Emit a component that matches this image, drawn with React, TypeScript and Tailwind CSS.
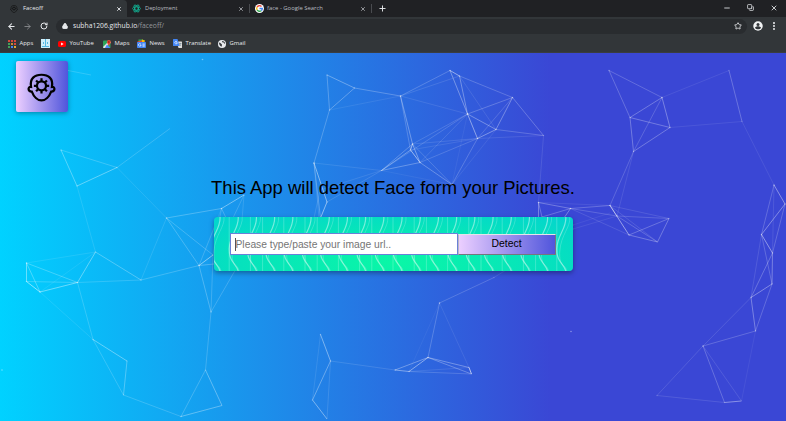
import React from 'react';
import { ArrowLeft, ArrowRight, Lock, Minus, MoreVertical, Plus, RotateCw, Star, X, Copy } from 'lucide-react';

type Segment = [number, number, number, number, number];

// x1, y1, x2, y2, opacity in page coordinates
const segments: Segment[] = [
  [68, 70.5, 91, 75, 0.2],
  [61, 150, 117, 167.5, 0.25], [61, 150, 77, 186, 0.4], [77, 186, 117, 167.5, 0.45], [117, 167.5, 170, 128.5, 0.22],
  [117, 167.5, 166.5, 218, 0.12], [77, 186, 95.5, 252, 0.14],
  [166.5, 218, 221.5, 208.5, 0.3], [221.5, 208.5, 244, 195, 0.5], [221.5, 208.5, 199, 265.5, 0.1],
  [221.5, 208.5, 213, 255, 0.2], [221.5, 208.5, 228, 222, 0.25], [244, 195, 232, 220, 0.2], [244, 195, 242, 220, 0.15],
  [26.5, 263, 26.5, 281.5, 0.5], [26.5, 263, 40, 292, 0.35], [26.5, 263, 77.5, 282.5, 0.3], [26.5, 263, 95.5, 252, 0.12],
  [26.5, 281.5, 40, 292, 0.65], [26.5, 281.5, 77.5, 282.5, 0.25], [40, 292, 77.5, 282.5, 0.5], [40, 292, 95.5, 252, 0.1],
  [77.5, 282.5, 95.5, 252, 0.45], [77.5, 282.5, 141, 280, 0.2], [95.5, 252, 141, 280, 0.35], [77.5, 282.5, 93, 339.5, 0.22],
  [40, 292, 93, 339.5, 0.12], [141, 280, 166.5, 218, 0.14], [141, 280, 199, 265.5, 0.25], [166.5, 218, 199, 265.5, 0.28],
  [166.5, 218, 213, 255, 0.25], [199, 265.5, 213, 255, 0.6], [199, 265.5, 214, 264, 0.3], [199, 265.5, 211, 312, 0.3],
  [199, 265.5, 215, 226, 0.14], [213, 255, 211, 312, 0.22], [211, 312, 244, 255, 0.22], [211, 312, 205.5, 370, 0.22],
  [93, 339.5, 127, 361, 0.45], [93, 339.5, 123.5, 395, 0.22], [127, 361, 123.5, 395, 0.35], [123.5, 395, 181, 416.5, 0.22],
  [181, 416.5, 222, 405.5, 0.4], [181, 416.5, 205.5, 370, 0.25], [205.5, 370, 222, 405.5, 0.4],
  [327, 75, 354.5, 88, 0.4], [327, 75, 329.5, 110, 0.3], [354.5, 88, 329.5, 110, 0.35], [354.5, 88, 400.5, 96, 0.3],
  [329.5, 110, 400.5, 96, 0.1], [329.5, 110, 314, 163, 0.28], [314, 163, 327, 202, 0.55], [327, 202, 320.5, 218, 0.6],
  [314, 163, 320.5, 218, 0.3], [314, 163, 319, 218, 0.15], [314, 163, 381.5, 170.5, 0.12], [327, 202, 381.5, 170.5, 0.15],
  [320, 190, 314, 218, 0.15], [320, 190, 381.5, 170.5, 0.12],
  [400.5, 96, 450, 70.5, 0.25], [400.5, 96, 459.5, 76, 0.14], [400.5, 96, 467.5, 114, 0.12], [400.5, 96, 412.5, 144, 0.4],
  [400.5, 96, 410.5, 150, 0.25], [450, 70.5, 459.5, 76, 0.6], [450, 70.5, 467.5, 114, 0.3], [459.5, 76, 467.5, 114, 0.4],
  [459.5, 76, 512.5, 97.5, 0.25], [459.5, 76, 496, 129.5, 0.12], [467.5, 114, 512.5, 97.5, 0.28], [467.5, 114, 496, 129.5, 0.4],
  [467.5, 114, 477.5, 138.5, 0.45], [450, 70.5, 477.5, 138.5, 0.15], [512.5, 97.5, 496, 129.5, 0.4], [512.5, 97.5, 477.5, 138.5, 0.2],
  [512.5, 97.5, 543.5, 135.5, 0.3], [496, 129.5, 477.5, 138.5, 0.45], [496, 129.5, 543.5, 135.5, 0.25], [477.5, 138.5, 543.5, 135.5, 0.12],
  [477.5, 138.5, 452, 184.5, 0.25], [496, 129.5, 452, 184.5, 0.1], [467.5, 114, 412.5, 144, 0.18], [467.5, 114, 381.5, 170.5, 0.2],
  [467.5, 114, 420, 162.5, 0.15], [467.5, 114, 452, 184.5, 0.07], [477.5, 138.5, 412.5, 144, 0.14], [477.5, 138.5, 410.5, 150, 0.12],
  [477.5, 138.5, 420, 162.5, 0.2], [412.5, 144, 410.5, 150, 0.65], [412.5, 144, 420, 162.5, 0.45], [410.5, 150, 420, 162.5, 0.65],
  [412.5, 144, 381.5, 170.5, 0.3], [410.5, 150, 381.5, 170.5, 0.4], [420, 162.5, 381.5, 170.5, 0.35], [412.5, 144, 452, 184.5, 0.2],
  [420, 162.5, 452, 184.5, 0.35], [381.5, 170.5, 452, 184.5, 0.07], [543.5, 135.5, 538.5, 202.5, 0.13],
  [538.5, 202.5, 570.5, 208.5, 0.35], [538.5, 202.5, 538.5, 218, 0.4], [538.5, 202.5, 542, 217, 0.3], [542, 217, 570.5, 208.5, 0.3],
  [538.5, 202.5, 610, 205.5, 0.1], [570.5, 208.5, 610, 205.5, 0.28], [570.5, 208.5, 564, 218, 0.4], [570.5, 208.5, 617, 216, 0.22],
  [570.5, 208.5, 629, 235, 0.14], [573, 225, 610, 213, 0.08], [573, 229, 617, 216, 0.1],
  [609, 70.5, 662, 97.5, 0.25], [609, 70.5, 630, 117.5, 0.28], [662, 97.5, 630, 117.5, 0.35], [662, 97.5, 670, 127.5, 0.4],
  [662, 97.5, 633.5, 151.5, 0.22], [630, 117.5, 670, 127.5, 0.35], [630, 117.5, 633.5, 151.5, 0.35], [670, 127.5, 633.5, 151.5, 0.35],
  [662, 97.5, 729, 70.5, 0.1], [729, 70.5, 742, 121.5, 0.3], [670, 127.5, 742, 121.5, 0.1], [742, 121.5, 774, 185, 0.1],
  [633.5, 151.5, 610, 205.5, 0.22], [633.5, 151.5, 617, 216, 0.12],
  [610, 205.5, 629, 235, 0.6], [610, 205.5, 617, 216, 0.4], [610, 205.5, 657.5, 242, 0.15], [617, 216, 657.5, 242, 0.25],
  [617, 216, 669, 218.5, 0.2], [610, 205.5, 669, 218.5, 0.14], [629, 235, 669, 218.5, 0.3], [629, 235, 657.5, 242, 0.35],
  [669, 218.5, 657.5, 242, 0.35],
  [774, 185, 785, 204, 0.5], [774, 185, 761.5, 234.5, 0.25], [785, 204, 761.5, 234.5, 0.45], [785, 204, 772.5, 253, 0.25],
  [774, 185, 772.5, 253, 0.12], [761.5, 234.5, 772.5, 253, 0.55], [761.5, 234.5, 772, 284, 0.25], [772.5, 253, 772, 284, 0.4],
  [772.5, 253, 751, 297.5, 0.3], [761.5, 234.5, 751, 297.5, 0.14], [772, 284, 751, 297.5, 0.45], [772, 284, 755.5, 331, 0.25],
  [751, 297.5, 755.5, 331, 0.4], [755.5, 331, 703, 346, 0.25], [751, 297.5, 703, 346, 0.15], [703, 346, 657, 395.5, 0.15],
  [703, 346, 724.5, 402.5, 0.28], [703, 346, 741.5, 401, 0.14], [724.5, 402.5, 741.5, 401, 0.5], [657, 395.5, 724.5, 402.5, 0.14],
  [755.5, 331, 741.5, 401, 0.08],
  [439.5, 303, 494, 277.5, 0.22], [494, 277.5, 506, 270, 0.12], [439.5, 303, 428, 357.5, 0.25], [439.5, 303, 409, 371.5, 0.06],
  [439.5, 303, 469, 367.5, 0.1], [428, 357.5, 395, 370, 0.4], [428, 357.5, 409, 371.5, 0.55], [395, 370, 409, 371.5, 0.5],
  [428, 357.5, 469, 367.5, 0.4], [428, 357.5, 471.5, 374, 0.35], [469, 367.5, 471.5, 374, 0.8], [409, 371.5, 471.5, 374, 0.2],
  [409, 371.5, 469, 367.5, 0.12], [395, 370, 330.5, 361, 0.15], [320.5, 334.5, 330.5, 361, 0.5], [330.5, 361, 312.5, 400, 0.4],
  [320.5, 334.5, 312.5, 400, 0.12], [330.5, 361, 327, 419, 0.15], [312.5, 400, 327, 419, 0.5],
];

const loneDots = [[202.5, 59.5], [2, 370], [571, 331.5]];

function Particles() {
  return (
    <svg className="absolute inset-0 h-full w-full" viewBox="0 53 786 368" preserveAspectRatio="none" stroke="#fff" fill="#fff">
      {segments.map(([x1, y1, x2, y2, o], i) => (
        <g key={i}>
          <line x1={x1} y1={y1} x2={x2} y2={y2} strokeWidth=".8" opacity={o} />
          <circle cx={x1} cy={y1} r=".75" stroke="none" opacity=".16" />
        </g>
      ))}
      {loneDots.map(([x, y]) => (
        <circle key={x} cx={x} cy={y} r=".8" stroke="none" opacity=".4" />
      ))}
    </svg>
  );
}

function Waves() {
  return (
    <svg className="absolute inset-0 h-full w-full" viewBox="0 0 359 54" fill="none" stroke="#fff">
      {Array.from({ length: 22 }, (_, i) => {
        const x = i * 18.2 - 16;
        return (
          <g key={i}>
            <path d={`M${x + 22} 0C${x + 23} 12 ${x + 13} 18 ${x + 13} 32S${x + 20} 46 ${x + 22} 54`} opacity=".45" strokeWidth="1.2" />
            <path d={`M${x + 26} 0C${x + 27} 10 ${x + 17} 18 ${x + 16} 34S${x + 21} 46 ${x + 23} 54`} opacity=".22" strokeWidth=".9" />
            <path d={`M${x + (i % 3) * 3 + 10} 0V54`} opacity=".28" strokeWidth=".8" />
          </g>
        );
      })}
    </svg>
  );
}

function FaceGear({ className }: { className: string }) {
  return (
    <svg className={className} viewBox="0 0 30 30" fill="none" stroke="currentColor" strokeWidth="2.3">
      <path d="M4.2 14.4C2.6 5.5 8 1.8 15 1.8S27.4 5.5 25.8 14.4C29.5 14 29.2 19.4 25 19.2C23 24.5 19 28.4 15 28.4S7 24.5 5 19.2C.8 19.4 .5 14 4.2 14.4Z" />
      <circle cx="15" cy="13.3" r="4.7" />
      {[0, 45, 90, 135, 180, 225, 270, 315].map((a) => (
        <path key={a} d="M15 9V5.4" transform={`rotate(${a} 15 13.3)`} />
      ))}
    </svg>
  );
}

function ReactMark() {
  return (
    <svg className="size-[9px] shrink-0" viewBox="0 0 16 16" fill="none" stroke="#10bd9d" strokeWidth="1.3">
      {[0, 60, 120].map((a) => (
        <ellipse key={a} cx="8" cy="8" rx="7.2" ry="3" transform={`rotate(${a} 8 8)`} />
      ))}
    </svg>
  );
}

function GoogleMark() {
  return (
    <svg className="size-[9px] shrink-0" viewBox="0 0 18 18">
      <circle cx="9" cy="9" r="9" fill="#fff" />
      <g fill="none" strokeWidth="2.7">
        <path d="M13 5A5.6 5.6 0 0 0 4.2 6.2" stroke="#ea4335" />
        <path d="M4.2 6.2A5.6 5.6 0 0 0 4.2 11.8" stroke="#fbbc05" />
        <path d="M4.2 11.8A5.6 5.6 0 0 0 12.6 13.3" stroke="#34a853" />
        <path d="M12.6 13.3A5.6 5.6 0 0 0 14.6 9H9" stroke="#4285f4" />
      </g>
    </svg>
  );
}

function AppsMark() {
  const colors = ['#d5473b', '#d5473b', '#d5473b', '#41a25c', '#c98a33', '#d5473b', '#41a25c', '#4285f4', '#e0a935'];
  return (
    <span className="grid w-[8px] grid-cols-3 gap-[1px]">
      {colors.map((c, i) => (
        <i key={i} className="size-[2px]" style={{ backgroundColor: c }} />
      ))}
    </span>
  );
}

function WindowMark() {
  return (
    <svg className="size-[9px]" viewBox="0 0 9 9">
      <path fill="#cfeefa" d="M0 0h9v9H0z" />
      <path stroke="#35a9dc" d="M4.5 0v7M1 7.5h7M2.5 3v2M6.5 3v2" strokeWidth=".8" />
    </svg>
  );
}

function YoutubeMark() {
  return (
    <svg className="h-[6px] w-[8px]" viewBox="0 0 8 6">
      <rect width="8" height="6" rx="1.6" fill="#f00" />
      <path d="M3.1 1.6v2.8L5.6 3z" fill="#fff" />
    </svg>
  );
}

function MapsMark() {
  return (
    <svg className="size-[8px]" viewBox="0 0 16 16">
      <rect y="1" width="15" height="15" rx="2" fill="#2fa45a" />
      <path d="M0 14 12 2l4 3L5 16H1z" fill="#e6e6e6" />
      <path d="m8 9 7 7H4z" fill="#4c8bf5" />
      <path d="M11.5 12C10 8 8 7 8 4a3.7 3.7 0 0 1 7.6 0c0 3-2.6 4-4.1 8Z" fill="#ea4335" />
      <circle cx="11.7" cy="4" r="1.4" fill="#811411" />
    </svg>
  );
}

function NewsMark() {
  return (
    <svg className="size-[9px]" viewBox="0 0 18 18">
      <path d="M3 1h9v7H3z" fill="#34a853" />
      <path d="m10 1 6 2-2 6-6-2z" fill="#fbbc05" />
      <path d="m1 5 9-2v6H1z" fill="#ea4335" />
      <rect y="6" width="18" height="12" rx="1.5" fill="#4285f4" />
      <path d="M7.5 9.7a2.7 2.7 0 1 0 .8 2.3H6M11 10h4.5M11 12.2h4.5M11 14.4h4.5" stroke="#fff" strokeWidth="1.3" fill="none" />
    </svg>
  );
}

function TranslateMark() {
  return (
    <svg className="size-[9px]" viewBox="0 0 18 18">
      <path d="M7 5h10a1 1 0 0 1 1 1v11a1 1 0 0 1-1 1h-6z" fill="#dcdcdc" />
      <path d="M0 1a1 1 0 0 1 1-1h8l4 14H1a1 1 0 0 1-1-1z" fill="#4285f4" />
      <path d="M8 5.3a2.6 2.6 0 1 0 .8 2.2H6.3" stroke="#fff" strokeWidth="1.3" fill="none" />
      <path d="M12 9h5M14.5 8v1c0 2-1 3.5-2 4.5M13 10.5l3 3.5" stroke="#5c7689" strokeWidth="1" fill="none" />
    </svg>
  );
}

function GlobeMark() {
  return (
    <svg className="size-[8px]" viewBox="0 0 16 16">
      <circle cx="8" cy="8" r="8" fill="#e8eaed" />
      <path d="M2 5c3 0 3 2 5 3s0 3 1 5c-4 0-6-4-6-8Zm6-3c0 2 1 3 3 3s1 3 3 3c1-4-3-6-6-6Z" fill="#35383b" />
    </svg>
  );
}

function Bookmark({ icon, label, className }: { icon: React.ReactNode; label?: string; className: string }) {
  return (
    <div className={`flex shrink-0 items-center ${className}`}>
      {icon}
      {label && <span className="ml-[3.5px] pt-px whitespace-nowrap">{label}</span>}
    </div>
  );
}

export default function App() {
  return (
    <div className="flex h-[421px] w-[786px] flex-col overflow-hidden bg-[#323639] font-['Open_Sans','Noto_Sans',sans-serif] text-[5.9px] leading-none text-[#e8eaed]">
      <header className="flex h-[17px] shrink-0 bg-[#202124]">
        <div className="flex w-[127px] items-center rounded-tr-[4px] bg-[#323639] pl-[10px]">
          <FaceGear className="size-[8px] text-[#111]" />
          <span className="ml-[5px] w-[93px]">Faceoff</span>
          <X className="size-[6px]" strokeWidth={3.5} />
        </div>
        <div className="flex w-[122px] items-center pl-[5px] text-[#b9bcc0]">
          <ReactMark />
          <span className="ml-[4px] w-[93px] text-[5.7px]">Deployment</span>
          <X className="size-[6px]" strokeWidth={3} />
        </div>
        <div className="my-[4px] w-px bg-[#4a4c50]" />
        <div className="flex w-[121px] items-center pl-[5px] text-[#b9bcc0]">
          <GoogleMark />
          <span className="ml-[3px] w-[93px]">face - Google Search</span>
          <X className="size-[6px]" strokeWidth={3} />
        </div>
        <div className="my-[4px] w-px bg-[#4a4c50]" />
        <div className="flex items-center pl-[6px]">
          <Plus className="size-[9px]" strokeWidth={2.5} />
        </div>
        <div className="ml-auto flex items-center gap-[16px] pr-[8px] pb-[2px]">
          <Minus className="size-[8px]" strokeWidth={2.5} />
          <Copy className="size-[7px] rotate-90 -scale-x-100" strokeWidth={2.5} />
          <X className="size-[8px]" strokeWidth={2.5} />
        </div>
      </header>

      <nav className="flex h-[18px] shrink-0 items-center pl-[7px]">
        <ArrowLeft className="size-[9px]" strokeWidth={2.8} />
        <ArrowRight className="ml-[7px] size-[9px] text-[#85888b]" strokeWidth={2.5} />
        <RotateCw className="ml-[8px] size-[8px]" strokeWidth={3} />
        <div className="ml-[8px] flex h-[15px] w-[691px] items-center rounded-full bg-[#292c2f] pl-[6px]">
          <Lock className="size-[6px]" strokeWidth={3.5} fill="currentColor" />
          <span className="ml-[5px] pt-px text-[6.75px] whitespace-nowrap">
            subha1206.github.io<span className="text-[#94979b]">/faceoff/</span>
          </span>
          <Star className="mr-[5px] ml-auto size-[8px]" strokeWidth={2.5} />
        </div>
        <svg className="ml-[6px] size-[10px]" viewBox="0 0 20 20">
          <circle cx="10" cy="10" r="9.5" fill="#f1f3f4" />
          <circle cx="10" cy="7" r="3" fill="#323639" />
          <path d="M4 13.5c2-4 10-4 12 0-2 4-10 4-12 0Z" fill="#323639" />
        </svg>
        <MoreVertical className="ml-[6px] size-[10px]" strokeWidth={3} />
      </nav>

      <nav className="flex h-[18px] shrink-0 items-center border-b border-[#3a3d40] pl-[8px]">
        <Bookmark icon={<AppsMark />} label="Apps" className="w-[33px]" />
        <Bookmark icon={<WindowMark />} className="w-[17px]" />
        <Bookmark icon={<YoutubeMark />} label="YouTube" className="w-[45px]" />
        <Bookmark icon={<MapsMark />} label="Maps" className="w-[34px]" />
        <Bookmark icon={<NewsMark />} label="News" className="w-[36px]" />
        <Bookmark icon={<TranslateMark />} label="Translate" className="w-[45px]" />
        <Bookmark icon={<GlobeMark />} label="Gmail" className="w-[40px]" />
      </nav>

      <main className="relative flex flex-1 flex-col items-center bg-[linear-gradient(90deg,#00d2ff_0%,#3a47d5_70%)] font-['Liberation_Sans',Arial,sans-serif] text-black">
        <Particles />
        <div className="relative mt-[8px] ml-[16px] flex h-[51px] w-[52px] items-center justify-center self-start rounded-[2px] bg-[linear-gradient(90deg,#eccfff,#5055dc)] shadow-[0_1px_5px_rgba(0,0,0,0.35)]">
          <FaceGear className="mt-[2px] ml-[-2px] size-[29px]" />
        </div>
        <h1 className="relative mt-[66px] h-[20px] text-[18.45px] leading-[20px] whitespace-nowrap">This App will detect Face form your Pictures.</h1>
        <form
          onSubmit={(e) => e.preventDefault()}
          className="relative mt-[19px] flex h-[54px] w-[359px] items-center overflow-hidden rounded-[4px] bg-[radial-gradient(ellipse_at_50%_85%,#0af7a6_0%,#06e2bd_60%,#03d4cf_100%)] pl-[16px] shadow-[0_2px_5px_rgba(0,0,0,0.35)]"
        >
          <Waves />
          <div className="relative flex h-[22px] w-[228px] items-center border border-[#6a80d8] bg-white pl-[4px] text-[10.3px] text-[#757575]">
            <span className="h-[13px] w-px bg-[#555]" />
            <span className="pt-[2px] whitespace-nowrap">Please type/paste your image url..</span>
          </div>
          <button className="relative h-[21px] w-[98px] border border-t-[#e4e4e8] border-r-[#77747d] border-b-[#77747d] border-l-[#b9b9c6] bg-[linear-gradient(90deg,#eccfff,#5055dc)] pt-px text-[10.4px] leading-none">
            Detect
          </button>
        </form>
      </main>
    </div>
  );
}
